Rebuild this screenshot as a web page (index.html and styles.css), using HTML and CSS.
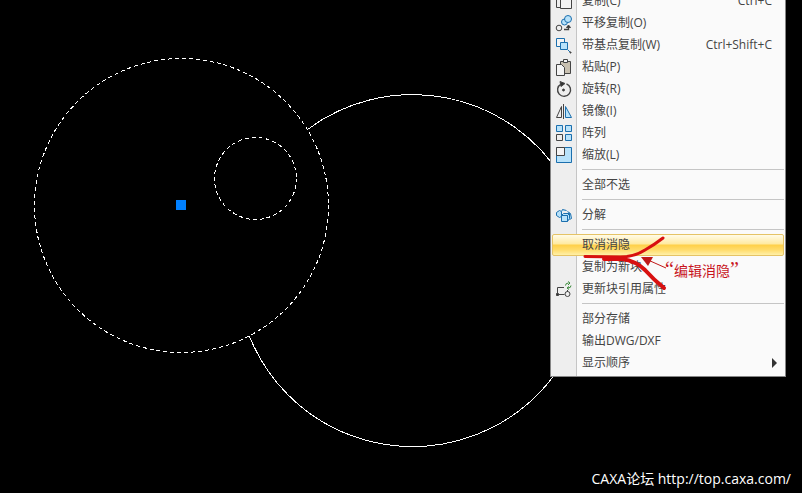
FILE: index.html
```
<!DOCTYPE html>
<html lang="zh-CN">

<head>
	<meta charset="utf-8">
	<title>CAXA</title>
	<link rel="stylesheet" href="styles.css">
</head>

<body>
	<main id="canvas">
		<svg class="drawing" xmlns="http://www.w3.org/2000/svg" width="802" height="493" shape-rendering="crispEdges">
			<circle class="dashed" cx="181.5" cy="205.5" r="147" />
			<circle class="dashed" cx="255.5" cy="178.5" r="41" />
			<path d="M307.5 129.5 A176 176 0 1 1 249.5 336.5" />
			<rect class="grip" x="176" y="200" width="10" height="10" />
		</svg>

		<div class="menu" role="menu">
			<button class="item" role="menuitem">
				<svg class="icon" viewBox="0 0 18 18"><path d="M1.500 2.500h8v13h-8z" /><path d="M5.500 4.500h11v12h-11z" class="paper" /></svg>
				<span>复制(C)</span><kbd>Ctrl+C</kbd>
			</button>
			<button class="item" role="menuitem">
				<svg class="icon" viewBox="0 0 18 18"><circle cx="4" cy="14" r="2.800" /><g class="blue"><circle cx="9.500" cy="8" r="3" /><circle cx="13" cy="5" r="3.500" /></g><path d="M9 15.500h4.500v-3" class="thick" /><path d="M11.500 13.500l2-2.500 2 2.500z" class="solid" /></svg>
				<span>平移复制(O)</span>
			</button>
			<button class="item" role="menuitem">
				<svg class="icon" viewBox="0 0 18 18"><g class="blue"><path d="M1.500 2.500h8v8h-8z" class="paper" /><path d="M5.500 6.500h7v7h-7z" /><path d="M13 14l2 2" /></g><path d="M15 16h1v1h-1z" class="solid" /></svg>
				<span>带基点复制(W)</span><kbd>Ctrl+Shift+C</kbd>
			</button>
			<button class="item" role="menuitem">
				<svg class="icon" viewBox="0 0 18 18"><path d="M5.500 3.500h10v12h-10z" class="board" /><path d="M8.500 1.500h4v3h-4z" class="paper" /><path d="M1.500 6.500h5l3 3v8h-8z" class="paper" /></svg>
				<span>粘贴(P)</span>
			</button>
			<button class="item" role="menuitem">
				<svg class="icon" viewBox="0 0 18 18"><path d="M11.500 3.800a6.500 6.500 0 1 1-5.500.3" class="thick" /><path d="M5 1.500l5 2-4 3z" class="solid" /><circle cx="8.500" cy="10" r="1" class="solid" /></svg>
				<span>旋转(R)</span>
			</button>
			<button class="item" role="menuitem">
				<svg class="icon" viewBox="0 0 18 18"><path d="M6.500 4.500v11h-5z" /><path d="M8.500 2v15" /><path d="M10.500 4.500v11h6z" class="blue" /></svg>
				<span>镜像(I)</span>
			</button>
			<button class="item" role="menuitem">
				<svg class="icon" viewBox="0 0 18 18"><g class="blue"><path d="M1.500 1.500h6v6h-6zM10.500 1.500h6v6h-6zM10.500 10.500h6v6h-6z" /></g><path d="M1.500 10.500h6v6h-6z" /></svg>
				<span>阵列</span>
			</button>
			<button class="item" role="menuitem">
				<svg class="icon" viewBox="0 0 18 18"><path d="M1.500 1.500h15v15h-15z" class="blue" /><path d="M1.500 1.500h8v8h-8z" class="paper" /></svg>
				<span>缩放(L)</span>
			</button>
			<hr>
			<button class="item" role="menuitem"><span>全部不选</span></button>
			<hr>
			<button class="item" role="menuitem">
				<svg class="icon" viewBox="0 0 18 18"><g class="blue"><path d="M1.500 6.500l3-2 2 1v5l-2 1-3-2z" /><path d="M6.500 5.500l1-2 4 1M12.500 5.500l3 2 1 5-2 1" /><path d="M6.500 9.500l2-2h6v5l-2 3h-6zM6.500 9.500h6v6M12.500 9.500l2-2" /></g></svg>
				<span>分解</span>
			</button>
			<hr>
			<button class="item active" role="menuitem"><span>取消消隐</span></button>
			<button class="item" role="menuitem"><span>复制为新块</span></button>
			<button class="item" role="menuitem">
				<svg class="icon" viewBox="0 0 18 18"><path d="M9 7.500h-6.500v7h7" /><path d="M1.500 13.500h2v2h-2z" class="solid" /><circle cx="12.500" cy="14" r="2.500" /><path d="M12.500 10v2" /><path d="M10.500 5.500q0-2.500 3-2.500M13 1.500l2 1.500-2 2M16 5.500q0 2.500-3 2.500M14 6.500l-2 1.500 2 1.500" class="green" /></svg>
				<span>更新块引用属性</span>
			</button>
			<hr>
			<button class="item" role="menuitem"><span>部分存储</span></button>
			<button class="item" role="menuitem"><span>输出DWG/DXF</span></button>
			<button class="item more" role="menuitem" aria-haspopup="true"><span>显示顺序</span></button>
		</div>

		<!-- hand-drawn marks over the menu -->
		<svg class="marks" xmlns="http://www.w3.org/2000/svg" width="802" height="493">
			<path class="stroke" d="M585 256.500 L620 257 Q634 257 645 250 Q654 245 663 238" />
			<path class="stroke thick" d="M604 259 H622 Q636 261 645 270 Q654 280 664 288" />
			<path class="arrow" d="M648 260 L666 268" />
			<path class="head" d="M641 257 L653 257 L648 266 Z" />
		</svg>
		<p class="note"><q>编辑消隐</q></p>
		<p class="watermark">CAXA论坛 http://top.caxa.com/</p>
	</main>
</body>

</html>
```
FILE: styles.css
```
body {
	margin: 0;
	background: #000;
	font-family: "Open Sans", "Noto Sans CJK SC", sans-serif;
}

p {
	margin: 0;
}

#canvas {
	position: relative;
	min-height: 100vh;
	overflow: hidden;
}

.drawing {
	position: absolute;
	left: 0;
	top: 0;
	fill: none;
	stroke: #fff;
}

.drawing .dashed {
	stroke-dasharray: 4 3;
}

.drawing .grip {
	fill: #0080ff;
	stroke: none;
}

/* context menu */
.menu {
	position: absolute;
	left: 550px;
	top: -12px;
	box-sizing: border-box;
	width: 236px;
	padding: 1px 1px 2px;
	border: 1px solid #868686;
	background: linear-gradient(90deg, #eee 25px, #c5c5c5 25px, #c5c5c5 26px, #fafafa 26px);
}

.item {
	display: grid;
	grid-template-columns: 27px 1fr auto;
	align-items: center;
	box-sizing: border-box;
	width: 100%;
	height: 22px;
	padding: 0 11px 0 2px;
	border: 1px solid transparent;
	background: none;
	color: #444;
	font: 12px/20px "Open Sans", "Noto Sans CJK SC", sans-serif;
	text-align: left;
	white-space: nowrap;
}

.item span {
	grid-column: 2;
}

.item kbd {
	font: inherit;
}

.item.active {
	border-color: #e5c365;
	border-radius: 2px;
	background: linear-gradient(#fffbe8, #ffeaa0 45%, #ffd048 50%, #ffdc6c 75%, #fff0a8);
}

.item.more::after {
	content: "";
	border: 5px solid transparent;
	border-left-color: #333;
	border-right: 0;
	margin-right: -8px;
}

.menu hr {
	height: 1px;
	margin: 3px 0 4px 30px;
	border: 0;
	background: #c5c5c5;
}

.icon {
	width: 18px;
	height: 18px;
	fill: none;
	stroke: #444;
}

.icon .paper {
	fill: #f4f4f4;
}

.icon .board {
	fill: #c8c0b0;
}

.icon .solid {
	fill: #333;
}

.icon .thick {
	stroke-width: 1.4;
}

.icon .blue {
	fill: #b8e2fa;
	stroke: #1b6fae;
}

.icon .green {
	stroke: #3a8a3a;
}

/* annotation */
.marks {
	position: absolute;
	left: 0;
	top: 0;
	fill: none;
	pointer-events: none;
}

.marks .stroke {
	stroke: #d81010;
	stroke-width: 3;
	stroke-linecap: round;
}

.marks .thick {
	stroke-width: 4;
}

.marks .arrow {
	stroke: #c01818;
}

.marks .head {
	fill: #c01818;
}

.note {
	position: absolute;
	left: 665px;
	top: 261px;
	color: #c8141c;
	font: 14px/22px "Liberation Serif", "Noto Sans CJK SC", serif;
}

.note q {
	quotes: "“" "”";
}

.note q::before,
.note q::after {
	font-size: 20px;
	line-height: 1px;
}

.watermark {
	position: absolute;
	right: 11px;
	bottom: 4px;
	color: #fff;
	font-size: 14px;
	line-height: 20px;
}
```
